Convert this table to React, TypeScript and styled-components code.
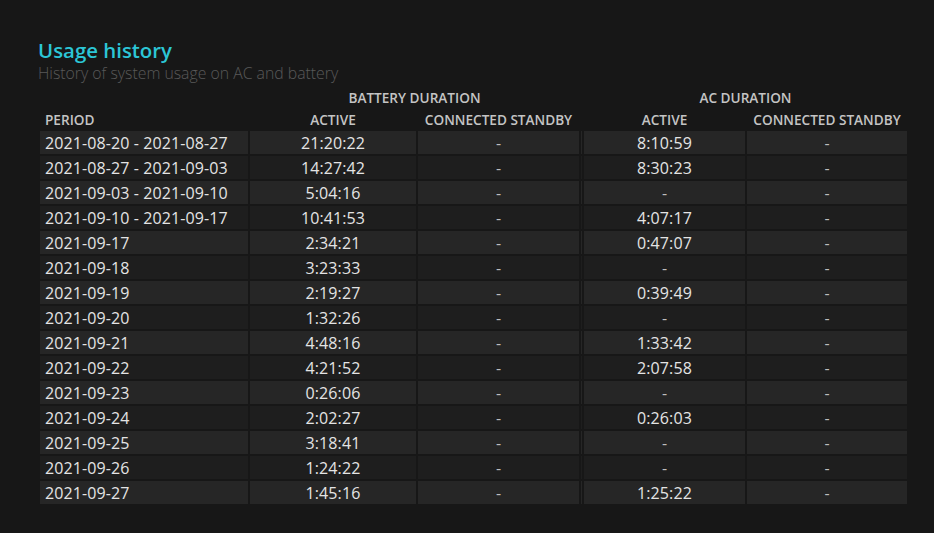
import React from "react";
import styled, { createGlobalStyle } from "styled-components";

const GlobalStyle = createGlobalStyle`
  html, body {
    margin: 0;
    padding: 0;
    background: #171717;
  }
  body {
    font-family: "Open Sans", "Noto Sans", "DejaVu Sans", sans-serif;
  }
`;

const Page = styled.div`
  width: 934px;
  height: 533px;
  box-sizing: border-box;
  padding: 36px 0 0 38px;
  background: #171717;
  overflow: hidden;
`;

const Title = styled.h1`
  margin: 0;
  font-size: 20.4px;
  line-height: 28px;
  font-weight: 600;
  color: #2cc6d6;
`;

const Subtitle = styled.div`
  margin: 0;
  font-size: 15.8px;
  line-height: 19px;
  font-weight: 300;
  color: #595959;
`;

const Table = styled.table`
  margin-top: 2px;
  border-collapse: separate;
  border-spacing: 2px;
  table-layout: fixed;
  width: 871px;
`;

const Col = styled.col<{ $w: number }>`
  width: ${(p) => p.$w}px;
`;

const GroupHead = styled.th`
  box-sizing: border-box;
  height: 20px;
  padding: 1px 0 0;
  font-size: 13.6px;
  font-weight: 600;
  color: #c4c4c4;
  text-align: center;
  line-height: 19px;
  white-space: nowrap;
`;

const ColHead = styled.th<{ $left?: boolean }>`
  box-sizing: border-box;
  height: 20px;
  padding: ${(p) => (p.$left ? "1px 0 0 5px" : "1px 0 0")};
  font-size: 13.6px;
  font-weight: 600;
  color: #c4c4c4;
  text-align: ${(p) => (p.$left ? "left" : "center")};
  line-height: 19px;
  white-space: nowrap;
`;

const Row = styled.tr<{ $odd: boolean }>`
  background: ${(p) => (p.$odd ? "#262626" : "#1e1e1e")};
`;

const Cell = styled.td<{ $left?: boolean; $dash?: boolean }>`
  box-sizing: border-box;
  height: 23px;
  padding: ${(p) => (p.$left ? "1px 0 0 5px" : "1px 0 0")};
  font-size: 16px;
  line-height: 22px;
  color: ${(p) => (p.$dash ? "#bdbdbd" : "#e4e4e4")};
  text-align: ${(p) => (p.$left ? "left" : "center")};
  white-space: nowrap;
  letter-spacing: 0.1px;
`;

const Spacer = styled.td`
  padding: 0;
`;

const rows: [string, string, string, string, string][] = [
  ["2021-08-20 - 2021-08-27", "21:20:22", "-", "8:10:59", "-"],
  ["2021-08-27 - 2021-09-03", "14:27:42", "-", "8:30:23", "-"],
  ["2021-09-03 - 2021-09-10", "5:04:16", "-", "-", "-"],
  ["2021-09-10 - 2021-09-17", "10:41:53", "-", "4:07:17", "-"],
  ["2021-09-17", "2:34:21", "-", "0:47:07", "-"],
  ["2021-09-18", "3:23:33", "-", "-", "-"],
  ["2021-09-19", "2:19:27", "-", "0:39:49", "-"],
  ["2021-09-20", "1:32:26", "-", "-", "-"],
  ["2021-09-21", "4:48:16", "-", "1:33:42", "-"],
  ["2021-09-22", "4:21:52", "-", "2:07:58", "-"],
  ["2021-09-23", "0:26:06", "-", "-", "-"],
  ["2021-09-24", "2:02:27", "-", "0:26:03", "-"],
  ["2021-09-25", "3:18:41", "-", "-", "-"],
  ["2021-09-26", "1:24:22", "-", "-", "-"],
  ["2021-09-27", "1:45:16", "-", "1:25:22", "-"],
];

export default function App() {
  return (
    <>
      <GlobalStyle />
      <Page>
        <Title>Usage history</Title>
        <Subtitle>History of system usage on AC and battery</Subtitle>
        <Table>
          <colgroup>
            <Col $w={208} />
            <Col $w={166} />
            <Col $w={161} />
            <Col $w={1} />
            <Col $w={161} />
            <Col $w={160} />
          </colgroup>
          <thead>
            <tr>
              <GroupHead />
              <GroupHead colSpan={2}>BATTERY DURATION</GroupHead>
              <GroupHead />
              <GroupHead colSpan={2}>AC DURATION</GroupHead>
            </tr>
            <tr>
              <ColHead $left>PERIOD</ColHead>
              <ColHead>ACTIVE</ColHead>
              <ColHead>CONNECTED STANDBY</ColHead>
              <ColHead />
              <ColHead>ACTIVE</ColHead>
              <ColHead>CONNECTED STANDBY</ColHead>
            </tr>
          </thead>
          <tbody>
            {rows.map((r, i) => (
              <Row key={r[0]} $odd={i % 2 === 0}>
                <Cell $left>{r[0]}</Cell>
                <Cell $dash={r[1] === "-"}>{r[1]}</Cell>
                <Cell $dash={r[2] === "-"}>{r[2]}</Cell>
                <Spacer />
                <Cell $dash={r[3] === "-"}>{r[3]}</Cell>
                <Cell $dash={r[4] === "-"}>{r[4]}</Cell>
              </Row>
            ))}
          </tbody>
        </Table>
      </Page>
    </>
  );
}
